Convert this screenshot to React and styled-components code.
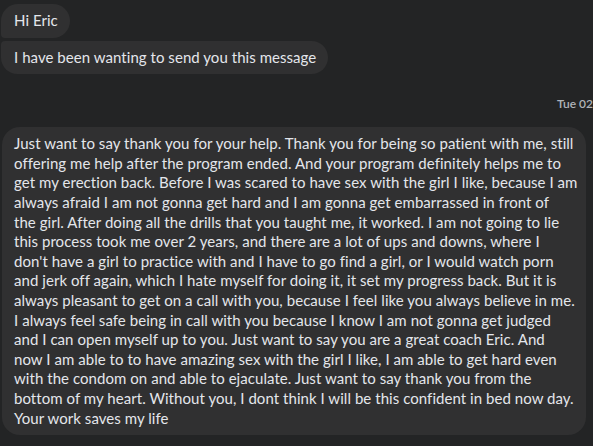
import React from "react";
import styled, { createGlobalStyle } from "styled-components";

const Global = createGlobalStyle`
  html, body { margin: 0; padding: 0; background: #232425; }
  body { width: 593px; height: 446px; overflow: hidden; font-family: "Segoe UI", Lato, "Noto Sans", sans-serif; }
`;

const Page = styled.div`
  width: 593px;
  height: 446px;
  background: #232425;
  display: flex;
  flex-direction: column;
  padding: 4px 0 0 1px;
  box-sizing: border-box;
  overflow: hidden;
`;

const Group = styled.div`
  display: flex;
  flex-direction: column;
  align-items: flex-start;
  gap: 3px;
`;

const Bubble = styled.div`
  background: #303031;
  color: #e4e6eb;
  font-size: 15px;
  letter-spacing: 0.05px;
  line-height: 19.6px;
  padding: 7px 12px 7px 13px;
  border-radius: ${(p) => p.$radius};
  white-space: nowrap;
`;

const Stamp = styled.div`
  align-self: flex-end;
  margin: 22px 0 0 0;
  height: 16px;
  line-height: 16px;
  font-size: 12px;
  font-weight: 600;
  color: #b0b3b8;
  white-space: nowrap;
`;

const Long = styled.div`
  margin: 15px 0 0 1px;
  width: 584px;
  box-sizing: border-box;
  background: #303031;
  color: #e4e6eb;
  font-size: 15px;
  letter-spacing: 0.05px;
  line-height: 19.6px;
  padding: 7px 12px 7px 12px;
  border-radius: 18px;
`;

const Line = styled.div`
  white-space: nowrap;
`;

const lines = [
  "Just want to say thank you for your help. Thank you for being so patient with me, still",
  "offering me help after the program ended. And your program definitely helps me to",
  "get my erection back. Before I was scared to have sex with the girl I like, because I am",
  "always afraid I am not gonna get hard and I am gonna get embarrassed in front of",
  "the girl. After doing all the drills that you taught me, it worked. I am not going to lie",
  "this process took me over 2 years, and there are a lot of ups and downs, where I",
  "don't have a girl to practice with and I have to go find a girl, or I would watch porn",
  "and jerk off again, which I hate myself for doing it, it set my progress back. But it is",
  "always pleasant to get on a call with you, because I feel like you always believe in me.",
  "I always feel safe being in call with you because I know I am not gonna get judged",
  "and I can open myself up to you. Just want to say you are a great coach Eric. And",
  "now I am able to to have amazing sex with the girl I like, I am able to get hard even",
  "with the condom on and able to ejaculate. Just want to say thank you from the",
  "bottom of my heart. Without you, I dont think I will be this confident in bed now day.",
  "Your work saves my life",
];

export default function App() {
  return (
    <>
      <Global />
      <Page>
        <Group>
          <Bubble $radius="17px 17px 17px 4px">Hi Eric</Bubble>
          <Bubble $radius="4px 17px 17px 17px">I have been wanting to send you this message</Bubble>
        </Group>
        <Stamp>Tue 02</Stamp>
        <Long>
          {lines.map((l, i) => (
            <Line key={i}>{l}</Line>
          ))}
        </Long>
      </Page>
    </>
  );
}
